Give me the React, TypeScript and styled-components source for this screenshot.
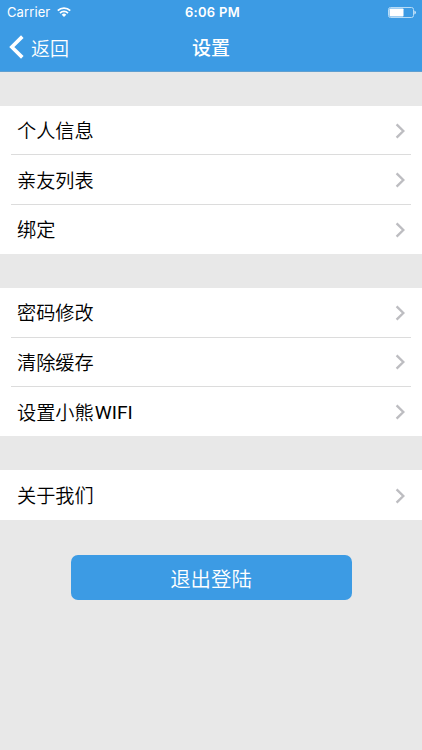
import React from 'react';
import styled, { createGlobalStyle } from 'styled-components';

const Global = createGlobalStyle`
  * { box-sizing: border-box; }
  body { margin: 0; background: #e8e8e8; font-family: Roboto, "Noto Sans CJK SC", sans-serif; }
  button { font: inherit; border: 0; padding: 0; background: none; }
`;

const Screen = styled.main`
  width: 422px;
  height: 750px;
  overflow: hidden;
  background: #e8e8e8;
  display: flex;
  flex-direction: column;
`;

const Header = styled.header`
  height: 72px;
  flex: none;
  background: #3c9be4;
  border-bottom: 1px solid #5f9fd0;
  color: #fff;
`;

const StatusBar = styled.div`
  height: 23px;
  display: grid;
  grid-template-columns: 1fr auto 1fr;
  align-items: center;
  padding: 1px 6px 0 7px;
  font-family: Inter, sans-serif;
  font-size: 13px;
`;

const Carrier = styled.span`
  display: flex;
  align-items: center;
  gap: 7px;
  letter-spacing: 0.1px;
`;

const Clock = styled.span`
  font-weight: 600;
  letter-spacing: 0.3px;
  padding-left: 2px;
`;

const Battery = styled.svg`
  justify-self: end;
`;

const NavBar = styled.nav`
  height: 48px;
  display: grid;
  grid-template-columns: 1fr auto 1fr;
  align-items: center;
  padding: 0 9px;
`;

const BackButton = styled.button`
  && {
    display: flex;
    align-items: center;
    gap: 7px;
    color: #fff;
    font-size: 19px;
    font-weight: 350;
  }
`;

const Title = styled.h1`
  margin: 0;
  padding-top: 3px;
  font-size: 19px;
  line-height: 28px;
  font-weight: 500;
`;

const Group = styled.ul`
  list-style: none;
  margin: 34px 0 0;
  padding: 0 11px;
  background: #fff;
`;

const Row = styled.li`
  height: 49.4px;
  padding: 1px 6px 0;
  display: flex;
  align-items: center;
  justify-content: space-between;
  font-size: 19.2px;
  font-weight: 350;
  color: #000;
  &:not(:last-child) { border-bottom: 1px solid #dcdcdc; }
`;

const Label = styled.span`
  display: flex;
  align-items: center;
  line-height: 28px;
  padding-top: 3px;
`;

const Latin = styled.span`
  font-weight: 400;
  padding: 0 0 2px 1px;
`;

const LogoutButton = styled.button`
  && {
    width: 281px;
    height: 45px;
    margin: 35.5px auto 0;
    border-radius: 7px;
    background: #3c9be4;
    color: #fff;
    font-size: 20.4px;
    font-weight: 350;
  }
`;

const Chevron = () => (
  <svg width="10" height="16" viewBox="0 0 10 16" fill="none" stroke="#bdbdc1" strokeWidth="2.4">
    <path d="M1.6 1.4 8.3 8l-6.7 6.6" />
  </svg>
);

interface Item {
  text: string;
  latin?: string;
}

const groups: Item[][] = [
  [{ text: '个人信息' }, { text: '亲友列表' }, { text: '绑定' }],
  [{ text: '密码修改' }, { text: '清除缓存' }, { text: '设置小熊', latin: 'WIFI' }],
  [{ text: '关于我们' }],
];

export default function App() {
  return (
    <Screen>
      <Global />
      <Header>
        <StatusBar>
          <Carrier>
            Carrier
            <svg width="14" height="10" viewBox="0 0 14 10" fill="none" stroke="#fff" strokeWidth="1.8">
              <path d="M.8 3.7a8.8 8.8 0 0 1 12.4 0M3 6.1a5.7 5.7 0 0 1 8 0" />
              <path d="M7 10 4.7 7.8a3.2 3.2 0 0 1 4.6 0z" fill="#fff" stroke="none" />
            </svg>
          </Carrier>
          <Clock>6:06 PM</Clock>
          <Battery width="28" height="11" viewBox="0 0 28 11">
            <rect x=".5" y=".5" width="25" height="10" rx="2" fill="none" stroke="#b8dcf6" />
            <rect x="1.5" y="1.5" width="14" height="8" rx=".7" fill="#fff" />
            <path d="M26.4 3.6q1.5.5 1.5 1.9t-1.5 1.9z" fill="#d5ebfa" />
          </Battery>
        </StatusBar>
        <NavBar>
          <BackButton>
            <svg width="15" height="24" viewBox="0 0 15 24" fill="none" stroke="#fff" strokeWidth="3.6">
              <path d="M13.3 1.6 2.8 12l10.5 10.4" />
            </svg>
            返回
          </BackButton>
          <Title>设置</Title>
        </NavBar>
      </Header>
      {groups.map((rows) => (
        <Group key={rows[0].text}>
          {rows.map(({ text, latin }) => (
            <Row key={text}>
              <Label>
                {text}
                {latin && <Latin>{latin}</Latin>}
              </Label>
              <Chevron />
            </Row>
          ))}
        </Group>
      ))}
      <LogoutButton>退出登陆</LogoutButton>
    </Screen>
  );
}
